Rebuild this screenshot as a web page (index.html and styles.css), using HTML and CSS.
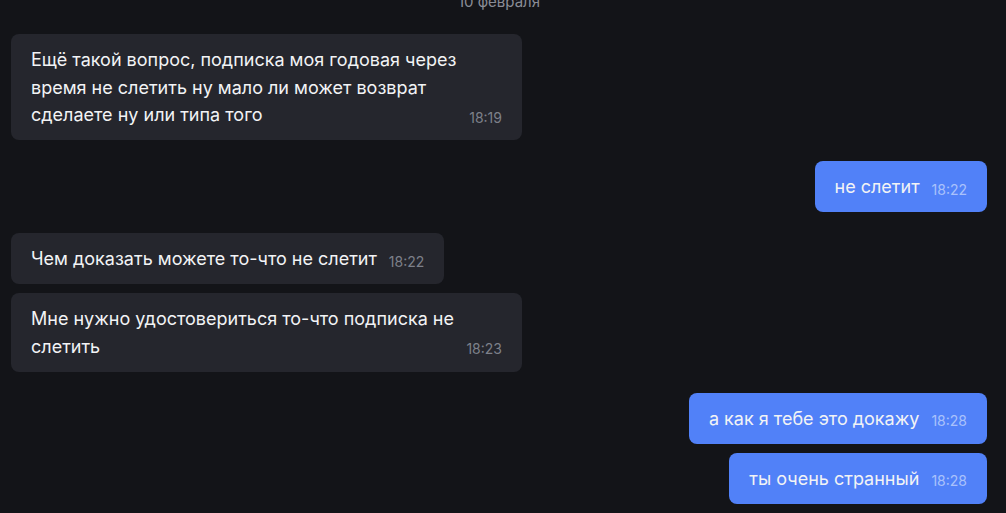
FILE: index.html
```html
<!DOCTYPE html>
<html lang="ru">
<head>
<meta charset="utf-8">
<link rel="stylesheet" href="styles.css">
</head>
<body>
<div class="chat">
  <div class="date">10 февраля</div>
  <div class="group in">
    <div class="msg"><span class="text">Ещё такой вопрос, подписка моя годовая через время не слетить ну мало ли может возврат сделаете ну или типа того</span><span class="time">18:19</span></div>
  </div>
  <div class="group out">
    <div class="msg"><span class="text">не слетит</span><span class="time">18:22</span></div>
  </div>
  <div class="group in">
    <div class="msg"><span class="text">Чем доказать можете то-что не слетит</span><span class="time">18:22</span></div>
    <div class="msg"><span class="text">Мне нужно удостовериться то-что подписка не слетить</span><span class="time">18:23</span></div>
  </div>
  <div class="group out">
    <div class="msg"><span class="text">а как я тебе это докажу</span><span class="time">18:28</span></div>
    <div class="msg"><span class="text">ты очень странный</span><span class="time">18:28</span></div>
  </div>
</div>
</body>
</html>
```
FILE: styles.css
```css
html, body {
  margin: 0;
  padding: 0;
  background: #131418;
  height: 100%;
  overflow: hidden;
}
body {
  font-family: Inter, "Noto Sans", sans-serif;
  color: #f2f3f5;
}
.chat {
  display: flex;
  flex-direction: column;
  gap: 21px;
  padding: 0 19px 0 11px;
  margin-top: -8px;
}
.date {
  text-align: center;
  font-size: 15px;
  line-height: 20px;
  color: #8a8d96;
  margin-bottom: 1px;
}
.group {
  display: flex;
  flex-direction: column;
  gap: 9px;
}
.group.in { align-items: flex-start; }
.group.out { align-items: flex-end; }
.msg {
  display: flex;
  align-items: flex-end;
  gap: 12px;
  max-width: 511px;
  box-sizing: border-box;
  padding: 12px 20px 11.5px;
  border-radius: 8px;
  font-size: 18px;
  line-height: 27.5px;
}
.in .msg { background: #25262d; }
.out .msg { background: #5181f8; }
.text { flex: 0 1 auto; }
.time {
  flex: 0 0 auto;
  font-size: 14px;
  line-height: 22px;
}
.in .time { color: #7d808a; }
.out .time { color: #aac1fb; }
```
